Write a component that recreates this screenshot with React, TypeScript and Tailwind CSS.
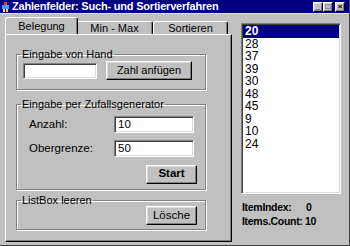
import React from 'react';

const items = ['20', '28', '37', '39', '30', '48', '45', '9', '10', '24'];

const raised =
  'bg-[#c0c0c0] border border-t-white border-l-white border-r-black border-b-black shadow-[inset_-1px_-1px_0_#808080,inset_1px_1px_0_#dfdfdf]';
const sunken =
  'bg-white border border-t-[#808080] border-l-[#808080] border-r-white border-b-white shadow-[inset_1px_1px_0_#404040,inset_-1px_-1px_0_#dfdfdf]';

const TitleButton = ({ children }: { children: React.ReactNode }) => (
  <div className={`w-[10px] h-[10px] flex items-center justify-center text-[8px] leading-none font-bold ${raised}`}>
    {children}
  </div>
);

const Group = ({ title, className, children }: { title: string; className: string; children: React.ReactNode }) => (
  <fieldset
    className={`border border-[#808080] shadow-[inset_1px_1px_0_#fff,1px_1px_0_#fff] ml-[10px] w-[190px] ${className}`}
  >
    <legend className="ml-[4px] px-[1px] leading-[11px]">{title}</legend>
    {children}
  </fieldset>
);

const Tab = ({ label, active, width }: { label: string; active?: boolean; width: string }) => (
  <div
    className={`${width} flex items-center justify-center border-l border-t border-r border-l-white border-t-white border-r-black rounded-t-[3px] shadow-[inset_-1px_0_0_#808080] ${
      active ? 'h-[17px] -mb-[1px] z-10 bg-[#c0c0c0] -ml-[2px] -mr-[2px] px-[2px]' : 'h-[13px] mt-[4px]'
    }`}
  >
    {label}
  </div>
);

export default function App() {
  return (
    <div className="w-[350px] h-[246px] bg-[#c0c0c0] flex flex-col font-['Liberation_Sans',Arial,sans-serif] text-[11px] text-black overflow-hidden border-r border-b border-[#404040]">
      <div className="h-[13px] bg-[#000080] flex items-center pl-[1px] pr-[4px] gap-[2px]">
        <svg width="9" height="10" viewBox="0 0 9 10">
          <rect x="3" y="0" width="3" height="3" fill="#e04020" />
          <rect x="1" y="3" width="7" height="4" fill="#40a0ff" />
          <rect x="2" y="7" width="2" height="3" fill="#ffd040" />
          <rect x="5" y="7" width="2" height="3" fill="#ffd040" />
        </svg>
        <span className="text-white font-bold text-[11px] leading-none tracking-[-0.2px] flex-1">
          Zahlenfelder: Such- und Sortierverfahren
        </span>
        <div className="flex">
          <TitleButton>_</TitleButton>
          <TitleButton>□</TitleButton>
          <div className="ml-[2px]">
            <TitleButton>×</TitleButton>
          </div>
        </div>
      </div>

      <div className="flex flex-1 pt-[3px] border-t border-t-[#dfdfdf]">
        <div className="ml-[5px] w-[227px] flex flex-col">
          <div className="flex pl-[2px] items-start">
            <Tab label="Belegung" active width="w-[73px]" />
            <Tab label="Min - Max" width="w-[77px]" />
            <Tab label="Sortieren" width="w-[75px]" />
          </div>
          <div className="h-[208px] border border-t-white border-l-white border-r-black border-b-black shadow-[inset_-1px_-1px_0_#808080] flex flex-col pt-[14px]">
            <Group title="Eingabe von Hand" className="h-[41px] flex items-center">
              <div className="flex items-center pl-[6px] pt-[1px] gap-[9px]">
                <div className={`w-[74px] h-[16px] ${sunken}`} />
                <div className={`w-[86px] h-[19px] flex items-center justify-center ${raised}`}>Zahl anfügen</div>
              </div>
            </Group>

            <Group title="Eingabe per Zufallsgenerator" className="mt-[9px] h-[91px]">
              <div className="flex flex-col pl-[12px] pr-[11px] pt-[6px]">
                <div className="flex items-center justify-between">
                  <span className="text-[11.5px]">Anzahl:</span>
                  <div className={`w-[80px] h-[17px] flex items-center pl-[3px] text-[11.5px] ${sunken}`}>10</div>
                </div>
                <div className="flex items-center justify-between mt-[7px]">
                  <span className="text-[11.5px]">Obergrenze:</span>
                  <div className={`w-[80px] h-[17px] flex items-center pl-[3px] text-[11.5px] ${sunken}`}>50</div>
                </div>
                <div className="flex justify-end mt-[7px] -mr-[3px]">
                  <div className={`w-[51px] h-[19px] flex items-center justify-center font-bold text-[11.5px] ${raised}`}>
                    Start
                  </div>
                </div>
              </div>
            </Group>

            <Group title="ListBox leeren" className="mt-[5px] h-[35px]">
              <div className="flex justify-end pr-[8px] pt-[0px]">
                <div className={`w-[51px] h-[19px] flex items-center justify-center text-[11.5px] ${raised}`}>Lösche</div>
              </div>
            </Group>
          </div>
        </div>

        <div className="ml-[9px] w-[100px] flex flex-col pt-[6px]">
          <div className={`h-[171px] flex flex-col pt-[1px] pl-[1px] pr-[1px] ${sunken}`}>
            {items.map((n, i) => (
              <div
                key={i}
                className={`h-[12.5px] leading-[12.5px] pl-[2px] text-[12px] ${
                  i === 0 ? 'bg-[#000080] text-white font-bold' : ''
                }`}
              >
                {n}
              </div>
            ))}
          </div>
          <div className="mt-[7px] flex flex-col gap-[2px] pl-[1px] font-bold text-[10.5px] leading-[12px] tracking-[-0.3px]">
            <div className="flex">
              <span className="w-[64px]">ItemIndex:</span>
              <span>0</span>
            </div>
            <div className="flex">
              <span className="w-[63px]">Items.Count:</span>
              <span>10</span>
            </div>
          </div>
        </div>
      </div>
    </div>
  );
}
